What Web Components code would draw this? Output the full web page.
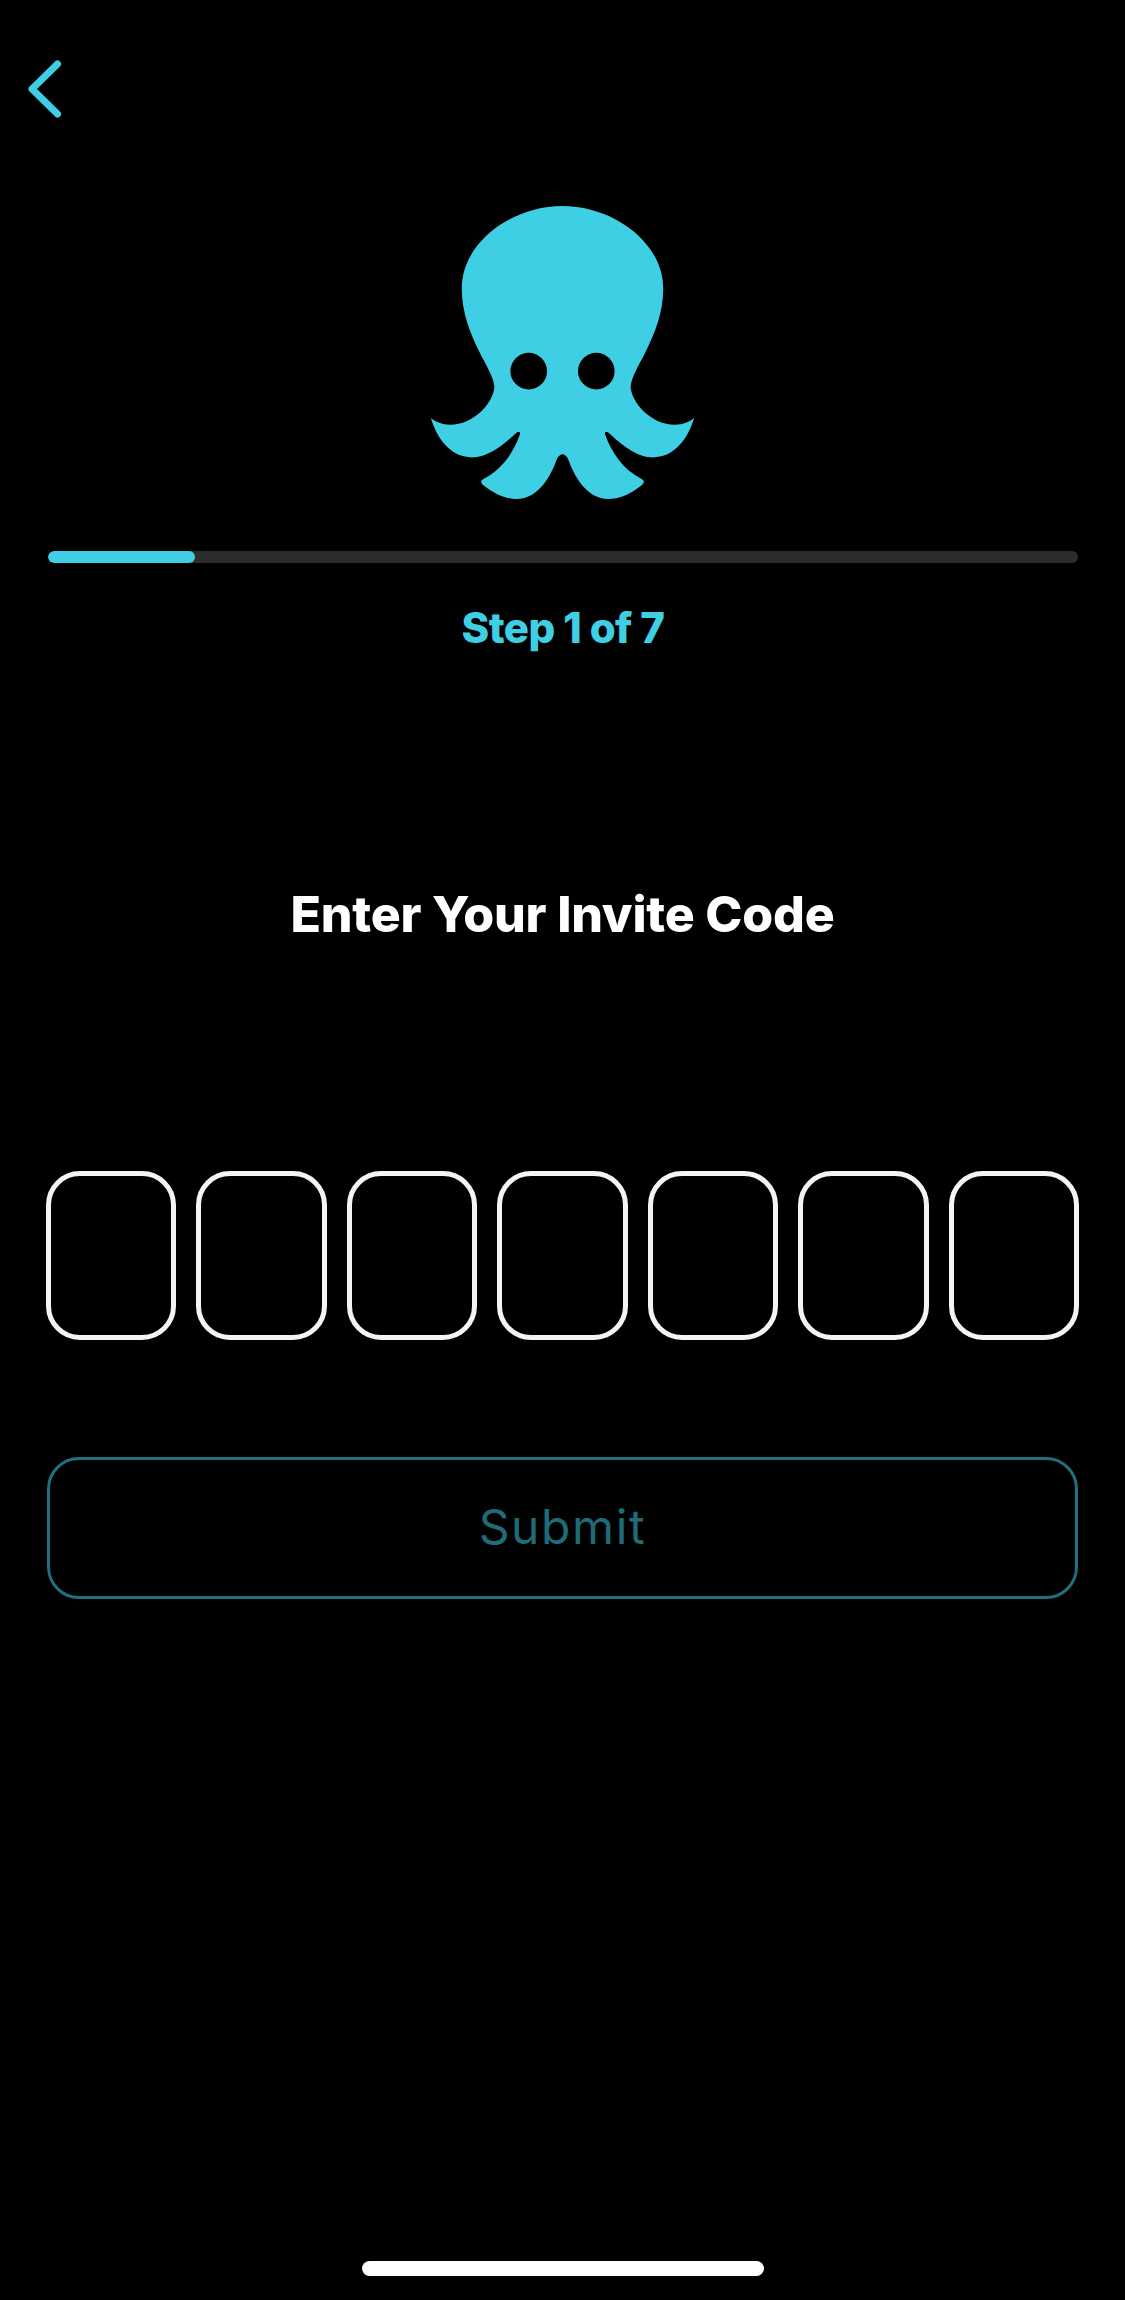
<!DOCTYPE html>
<html>
<head>
<meta charset="utf-8">
<title>Invite Code</title>
<style>
  html, body { margin: 0; padding: 0; background: #000; }
</style>
</head>
<body>
<onboarding-screen>
  <back-button></back-button>
  <octopus-logo></octopus-logo>
  <step-progress step="1" total="7"></step-progress>
  <screen-title>Enter Your Invite Code</screen-title>
  <code-boxes count="7"></code-boxes>
  <submit-button>Submit</submit-button>
  <home-indicator></home-indicator>
</onboarding-screen>

<script>
class OnboardingScreen extends HTMLElement {
  constructor() {
    super();
    this.shadowDOM = this.attachShadow({mode: 'open'});
    this.shadowDOM.innerHTML = `
    <style>
    :host {
      display: flex;
      flex-direction: column;
      width: 1125px;
      height: 2300px;
      background: #000;
      color: #fff;
      font-family: "Inter", "Liberation Sans", sans-serif;
      overflow: hidden;
    }
    </style>
    <slot></slot>
    `;
  }
}

class BackButton extends HTMLElement {
  constructor() {
    super();
    this.shadowDOM = this.attachShadow({mode: 'open'});
    this.shadowDOM.innerHTML = `
    <style>
    :host {
      display: block;
      padding: 56px 0 0 24px;
      height: 64px;
    }
    svg { display: block; }
    </style>
    <svg width="40" height="64" viewBox="0 0 40 64" fill="none">
      <path d="M33.5 8 L8 33 L33.5 58" stroke="#3ecfe4" stroke-width="7" stroke-linecap="round" stroke-linejoin="round"/>
    </svg>
    `;
  }
}

class OctopusLogo extends HTMLElement {
  constructor() {
    super();
    this.shadowDOM = this.attachShadow({mode: 'open'});
    this.shadowDOM.innerHTML = `
    <style>
    :host {
      display: flex;
      justify-content: center;
      padding-top: 86px;
    }
    svg { display: block; }
    </style>
    <svg width="325" height="293" viewBox="0 48 975 880">
      <path fill="#3ecfe4" d="M487.5 48
        C640 48 790 158 790 295
        C790 370 765 430 735 490
        C720 520 695 560 692 590
        C695 640 755 705 825 705
        C850 705 868 697 883 685
        C860 760 815 803 760 803
        C710 803 665 765 625 728
        Q614 722 615 733
        C635 790 670 840 725 868
        Q738 875 727 885
        C690 915 655 928 625 928
        C570 928 530 880 503 805
        Q487.5 782 472 805
        C445 880 405 928 350 928
        C320 928 285 915 248 885
        Q237 875 250 868
        C305 840 340 790 360 733
        Q361 722 350 728
        C310 765 265 803 215 803
        C160 803 115 760 92 685
        C107 697 125 705 150 705
        C220 705 280 640 283 590
        C280 560 255 520 240 490
        C210 430 185 370 185 295
        C185 158 335 48 487.5 48 Z"/>
      <circle cx="386" cy="544" r="55" fill="#000"/>
      <circle cx="589" cy="544" r="55" fill="#000"/>
    </svg>
    `;
  }
}

class StepProgress extends HTMLElement {
  constructor() {
    super();
    this.shadowDOM = this.attachShadow({mode: 'open'});
  }

  connectedCallback() {
    const step = Number(this.getAttribute('step'));
    const total = Number(this.getAttribute('total'));
    this.shadowDOM.innerHTML = `
    <style>
    :host {
      display: block;
      padding: 52px 47px 0 48px;
    }
    .track {
      height: 12px;
      border-radius: 6px;
      background: #2c2c2f;
      overflow: hidden;
    }
    .fill {
      height: 100%;
      width: ${step / total * 100}%;
      border-radius: 6px;
      background: #3ecfe4;
    }
    p {
      margin: 41px 0 0;
      text-align: center;
      font-size: 42px;
      line-height: 48px;
      font-weight: 800;
      letter-spacing: -0.6px;
      color: #3ecfe4;
    }
    </style>
    <div class="track"><div class="fill"></div></div>
    <p>Step ${step} of ${total}</p>
    `;
  }
}

class ScreenTitle extends HTMLElement {
  constructor() {
    super();
    this.shadowDOM = this.attachShadow({mode: 'open'});
    this.shadowDOM.innerHTML = `
    <style>
    :host {
      display: block;
      margin-top: 235px;
      text-align: center;
      font-size: 50px;
      line-height: 54px;
      font-weight: 800;
      letter-spacing: -0.2px;
      padding-bottom: 2px;
      color: #fff;
    }
    </style>
    <slot></slot>
    `;
  }
}

class CodeBoxes extends HTMLElement {
  constructor() {
    super();
    this.shadowDOM = this.attachShadow({mode: 'open'});
  }

  connectedCallback() {
    const count = Number(this.getAttribute('count'));
    let boxes = '';
    for (let i = 0; i < count; i++) {
      boxes += '<div class="box"></div>';
    }
    this.shadowDOM.innerHTML = `
    <style>
    :host {
      display: grid;
      grid-template-columns: repeat(${count}, 1fr);
      gap: 20px;
      margin-top: 228px;
      padding: 0 46px;
    }
    .box {
      box-sizing: border-box;
      height: 169px;
      border: 5px solid #f4f4f4;
      border-radius: 34px;
    }
    </style>
    ${boxes}
    `;
  }
}

class SubmitButton extends HTMLElement {
  constructor() {
    super();
    this.shadowDOM = this.attachShadow({mode: 'open'});
    this.shadowDOM.innerHTML = `
    <style>
    :host {
      display: flex;
      box-sizing: border-box;
      align-items: center;
      justify-content: center;
      height: 142px;
      margin: 117px 47px 0;
      padding-bottom: 4px;
      border: 3px solid #216f7c;
      border-radius: 32px;
      font-size: 48px;
      font-weight: 400;
      letter-spacing: 1.6px;
      color: #1f6c79;
    }
    </style>
    <slot></slot>
    `;
  }
}

class HomeIndicator extends HTMLElement {
  constructor() {
    super();
    this.shadowDOM = this.attachShadow({mode: 'open'});
    this.shadowDOM.innerHTML = `
    <style>
    :host {
      display: block;
      width: 402px;
      height: 15px;
      margin: auto auto 24px;
      border-radius: 8px;
      background: #fff;
    }
    </style>
    `;
  }
}

customElements.define('onboarding-screen', OnboardingScreen);
customElements.define('back-button', BackButton);
customElements.define('octopus-logo', OctopusLogo);
customElements.define('step-progress', StepProgress);
customElements.define('screen-title', ScreenTitle);
customElements.define('code-boxes', CodeBoxes);
customElements.define('submit-button', SubmitButton);
customElements.define('home-indicator', HomeIndicator);
</script>
</body>
</html>
